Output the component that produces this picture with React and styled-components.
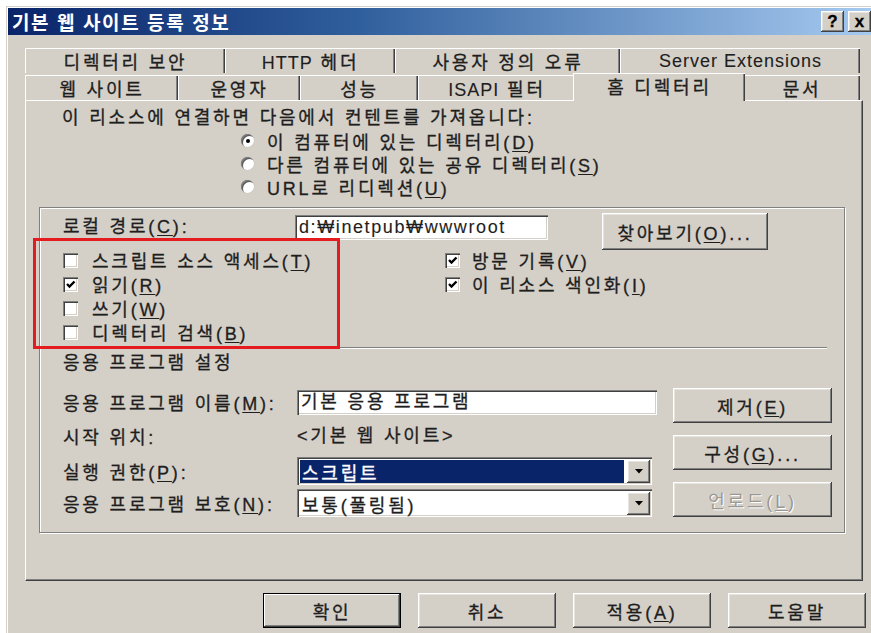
import React from 'react';
import styled, { createGlobalStyle, css } from 'styled-components';

const FACE = '#d4d0c8';
const SHADOW = '#808080';
const DARK = '#404040';
const LIGHT = '#ffffff';
const NAVY = '#0a246a';

const Global = createGlobalStyle`
  html, body { margin: 0; padding: 0; background: #fff; overflow: hidden; }
  body { font-family: "Liberation Sans", "Noto Sans CJK KR", sans-serif; }
`;

const raised = css`
  box-shadow: inset -1px -1px ${DARK}, inset 1px 1px ${LIGHT}, inset -2px -2px ${SHADOW}, inset 2px 2px #e6e4df;
`;

const sunken = css`
  box-shadow: inset 1px 1px ${SHADOW}, inset 2px 2px ${DARK}, inset -1px -1px ${LIGHT}, inset -2px -2px ${FACE};
`;

const Dialog = styled.div`
  box-sizing: border-box;
  width: 870px;
  margin: 6px 0 0 6px;
  padding: 2px;
  background: ${FACE};
  box-shadow: inset 1px 1px ${FACE}, inset 2px 2px ${LIGHT};
  font-size: 18px;
  letter-spacing: 2.8px;
  color: #1e1e1e;
  -webkit-text-stroke: 0.3px;
`;

const TitleBar = styled.div`
  height: 27px;
  display: flex;
  align-items: center;
  justify-content: space-between;
  padding: 0 3px 0 4px;
  background: linear-gradient(to right, ${NAVY} 0%, #2f5e9c 40%, #a6caf0 100%);
`;

const Title = styled.span`
  color: #fff;
  font-weight: bold;
  font-size: 19px;
  letter-spacing: 1.6px;
  -webkit-text-stroke: 0;
`;

const Captions = styled.div`
  display: flex;
  gap: 4px;
`;

const CaptionBtn = styled.div`
  width: 23px;
  height: 21px;
  background: ${FACE};
  ${raised};
  display: flex;
  align-items: center;
  justify-content: center;
  font-weight: bold;
  font-size: 17px;
  letter-spacing: 0;
  color: #000;
`;

const Body = styled.div`
  padding: 13px 11px 0 17px;
`;

const TabRow = styled.div`
  display: flex;
  height: ${p => (p.$front ? 27 : 25)}px;
`;

const Tab = styled.div`
  box-sizing: border-box;
  flex: none;
  width: ${p => p.$w + (p.$sel ? 4 : 0)}px;
  height: ${p => (p.$sel ? 28 : 25)}px;
  margin: ${p => (p.$sel ? '0 -2px -1px' : p.$front ? '2px 0 0' : '0')};
  padding-bottom: ${p => (p.$sel ? 4 : 0)}px;
  position: ${p => (p.$sel ? 'relative' : 'static')};
  z-index: ${p => (p.$sel ? 2 : 'auto')};
  background: ${FACE};
  border-top: 1px solid ${LIGHT};
  border-left: 1px solid ${LIGHT};
  box-shadow: inset -1px 0 ${DARK}, inset -2px 0 ${SHADOW};
  display: flex;
  align-items: center;
  justify-content: center;
  white-space: nowrap;
`;

const Latin = styled.span`
  letter-spacing: 1px;
  -webkit-text-stroke: 0.1px;
`;

const Panel = styled.div`
  box-sizing: border-box;
  position: relative;
  z-index: 1;
  border-top: 1px solid ${LIGHT};
  border-left: 1px solid ${LIGHT};
  border-right: 1px solid ${DARK};
  border-bottom: 1px solid ${DARK};
  box-shadow: inset -1px -1px ${SHADOW};
  padding-bottom: 47px;
`;

const Heading = styled.div`
  margin: 6px 0 0 36px;
  line-height: 22px;
`;

const RadioList = styled.div`
  margin-left: 215px;
`;

const RadioRow = styled.div`
  height: 23px;
  display: flex;
  align-items: center;
  gap: 13px;
`;

const Radio = styled.span`
  flex: none;
  position: relative;
  width: 13px;
  height: 13px;
  border-radius: 50%;
  background: #fff;
  box-shadow: inset 1px 1px ${SHADOW}, inset 2px 2px #5a5a5a, 0 0 0 0.5px #c8c4bc;
  &::after {
    content: '';
    display: ${p => (p.$on ? 'block' : 'none')};
    position: absolute;
    left: 5px;
    top: 5px;
    width: 4px;
    height: 4px;
    border-radius: 50%;
    background: #000;
  }
`;

const Key = styled.u`
  text-decoration: underline;
  text-underline-offset: 2px;
  text-decoration-thickness: 1px;
`;

const Group = styled.div`
  margin: 9px 17px 0 13px;
  border: 1px solid ${SHADOW};
  box-shadow: inset 1px 1px ${LIGHT}, 1px 1px ${LIGHT};
  padding-bottom: 14px;
`;

const PathRow = styled.div`
  display: flex;
  align-items: flex-start;
  height: 37px;
  padding: 5px 0 0 23px;
`;

const PathLabel = styled.div`
  width: 232px;
  line-height: 25px;
  margin-top: 2px;
`;

const TextBox = styled.div`
  box-sizing: border-box;
  flex: none;
  width: ${p => p.$w}px;
  height: 25px;
  margin-top: ${p => p.$mt || 0}px;
  background: #fff;
  ${sunken};
  padding-left: 4px;
  line-height: 25px;
  white-space: nowrap;
  overflow: hidden;
`;

const PathText = styled.span`
  letter-spacing: 1.6px;
  -webkit-text-stroke: 0.1px;
`;

const Button = styled.div`
  box-sizing: border-box;
  flex: none;
  width: ${p => p.$w}px;
  height: ${p => p.$h || 35}px;
  margin-left: ${p => p.$ml || 0}px;
  background: ${FACE};
  ${raised};
  display: flex;
  align-items: center;
  justify-content: center;
  white-space: nowrap;
  ${p => p.$default && css`
    box-shadow: inset 0 0 0 1px #000, inset -2px -2px ${DARK}, inset 2px 2px ${LIGHT}, inset -3px -3px ${SHADOW};
  `}
  ${p => p.$disabled && css`
    color: #9a9893;
    -webkit-text-stroke: 0;
    text-shadow: 1px 1px ${LIGHT};
  `}
`;

const CheckArea = styled.div`
  position: relative;
  margin-top: -2px;
  padding-left: 23px;
  display: grid;
  grid-template-columns: 382px 1fr;
  align-items: start;
`;

const CheckColumn = styled.div`
  display: flex;
  flex-direction: column;
`;

const CheckRow = styled.div`
  height: 24px;
  display: flex;
  align-items: center;
  gap: ${p => p.$gap || 14}px;
`;

const Box = styled.span`
  flex: none;
  width: 15px;
  height: 15px;
  background: #fff;
  ${sunken};
  display: flex;
  align-items: center;
  justify-content: center;
`;

const Check = ({ on }) => (
  <Box>
    {on && (
      <svg width="11" height="11" viewBox="0 0 11 11">
        <polyline points="2,5 4.5,7.5 9.5,2.5" fill="none" stroke="#000" strokeWidth="2.4" />
      </svg>
    )}
  </Box>
);

const Marker = styled.div`
  position: absolute;
  left: -7px;
  top: -10px;
  width: 307px;
  height: 111px;
  box-sizing: border-box;
  border: 3px solid #e41b1f;
  pointer-events: none;
`;

const Rule = styled.div`
  margin: 3px 17px 0 0;
  border-top: 1px solid ${SHADOW};
  border-bottom: 1px solid ${LIGHT};
`;

const SectionTitle = styled.div`
  margin: 3px 0 0 23px;
  line-height: 22px;
`;

const AppArea = styled.div`
  display: flex;
  align-items: flex-start;
  margin-top: 12px;
  padding-left: 23px;
`;

const FieldGrid = styled.div`
  display: grid;
  grid-template-columns: 234px 360px;
  grid-template-rows: 32px 36px 34px 30px;
  align-items: center;
`;

const FieldValue = styled.div`
  line-height: 25px;
`;

const SideButtons = styled.div`
  display: flex;
  flex-direction: column;
  gap: 12px;
  margin: 2px 0 0 16px;
`;

const ComboBox = styled.div`
  box-sizing: border-box;
  width: 355px;
  height: 28px;
  background: #fff;
  ${sunken};
  display: flex;
  padding: 3px 2px 2px 3px;
`;

const ComboValue = styled.div`
  flex: 1;
  display: flex;
  align-items: center;
  padding-left: 2px;
  margin-right: 3px;
  background: ${p => (p.$hl ? NAVY : 'transparent')};
  color: ${p => (p.$hl ? '#fff' : 'inherit')};
  white-space: nowrap;
`;

const ComboArrow = styled.div`
  width: 23px;
  background: ${FACE};
  ${raised};
  display: flex;
  align-items: center;
  justify-content: center;
`;

const Combo = ({ value, hl }) => (
  <ComboBox>
    <ComboValue $hl={hl}><span>{value}</span></ComboValue>
    <ComboArrow>
      <svg width="8" height="5" viewBox="0 0 8 5">
        <polygon points="0,0 8,0 4,4.5" fill="#000" />
      </svg>
    </ComboArrow>
  </ComboBox>
);

const Footer = styled.div`
  display: flex;
  justify-content: flex-end;
  gap: 17px;
  margin-top: 12px;
  padding: 0 8px 6px 0;
`;

const backTabs = [
  { label: '디렉터리 보안', w: 200 },
  { label: <><Latin>HTTP</Latin> 헤더</>, w: 170 },
  { label: '사용자 정의 오류', w: 225 },
  { label: <Latin>Server Extensions</Latin>, w: 240 },
];

const frontTabs = [
  { label: '웹 사이트', w: 153 },
  { label: '운영자', w: 122 },
  { label: '성능', w: 118 },
  { label: <><Latin>ISAPI</Latin> 필터</>, w: 157 },
  { label: '홈 디렉터리', w: 168, sel: true },
  { label: '문서', w: 117 },
];

export default function App() {
  return (
    <>
      <Global />
      <Dialog>
        <TitleBar>
          <Title>기본 웹 사이트 등록 정보</Title>
          <Captions>
            <CaptionBtn>?</CaptionBtn>
            <CaptionBtn>x</CaptionBtn>
          </Captions>
        </TitleBar>
        <Body>
          <TabRow>
            {backTabs.map((t, i) => (
              <Tab key={i} $w={t.w}><span>{t.label}</span></Tab>
            ))}
          </TabRow>
          <TabRow $front>
            {frontTabs.map((t, i) => (
              <Tab key={i} $w={t.w} $front $sel={t.sel}><span>{t.label}</span></Tab>
            ))}
          </TabRow>
          <Panel>
            <Heading>이 리소스에 연결하면 다음에서 컨텐트를 가져옵니다:</Heading>
            <RadioList>
              <RadioRow><Radio $on /><span>이 컴퓨터에 있는 디렉터리(<Key>D</Key>)</span></RadioRow>
              <RadioRow><Radio /><span>다른 컴퓨터에 있는 공유 디렉터리(<Key>S</Key>)</span></RadioRow>
              <RadioRow><Radio /><span>URL로 리디렉션(<Key>U</Key>)</span></RadioRow>
            </RadioList>
            <Group>
              <PathRow>
                <PathLabel>로컬 경로(<Key>C</Key>):</PathLabel>
                <TextBox $w={253} $mt={2}><PathText>d:₩inetpub₩wwwroot</PathText></TextBox>
                <Button $w={166} $h={37} $ml={54}><span>찾아보기(<Key>O</Key>)...</span></Button>
              </PathRow>
              <CheckArea>
                <CheckColumn>
                  <CheckRow><Check /><span>스크립트 소스 액세스(<Key>T</Key>)</span></CheckRow>
                  <CheckRow><Check on /><span>읽기(<Key>R</Key>)</span></CheckRow>
                  <CheckRow><Check /><span>쓰기(<Key>W</Key>)</span></CheckRow>
                  <CheckRow><Check /><span>디렉터리 검색(<Key>B</Key>)</span></CheckRow>
                </CheckColumn>
                <CheckColumn>
                  <CheckRow $gap={12}><Check on /><span>방문 기록(<Key>V</Key>)</span></CheckRow>
                  <CheckRow $gap={12}><Check on /><span>이 리소스 색인화(<Key>I</Key>)</span></CheckRow>
                </CheckColumn>
                <Marker />
              </CheckArea>
              <Rule />
              <SectionTitle>응용 프로그램 설정</SectionTitle>
              <AppArea>
                <FieldGrid>
                  <div>응용 프로그램 이름(<Key>M</Key>):</div>
                  <TextBox $w={360}>기본 응용 프로그램</TextBox>
                  <div>시작 위치:</div>
                  <FieldValue>&lt;기본 웹 사이트&gt;</FieldValue>
                  <div>실행 권한(<Key>P</Key>):</div>
                  <Combo value="스크립트" hl />
                  <div>응용 프로그램 보호(<Key>N</Key>):</div>
                  <Combo value="보통(풀링됨)" />
                </FieldGrid>
                <SideButtons>
                  <Button $w={159}><span>제거(<Key>E</Key>)</span></Button>
                  <Button $w={159}><span>구성(<Key>G</Key>)...</span></Button>
                  <Button $w={159} $disabled><span>언로드(<Key>L</Key>)</span></Button>
                </SideButtons>
              </AppArea>
            </Group>
          </Panel>
        </Body>
        <Footer>
          <Button $w={138} $default>확인</Button>
          <Button $w={138}>취소</Button>
          <Button $w={138}><span>적용(<Key>A</Key>)</span></Button>
          <Button $w={138}>도움말</Button>
        </Footer>
      </Dialog>
    </>
  );
}
